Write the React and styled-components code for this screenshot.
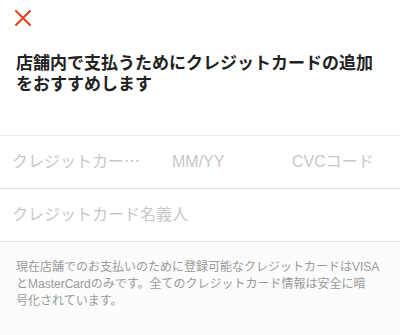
import React from "react";
import styled, { createGlobalStyle } from "styled-components";

const Global = createGlobalStyle`
  html, body {
    margin: 0;
    padding: 0;
    background: #ffffff;
  }
  body {
    font-family: "Liberation Sans", "Noto Sans CJK JP", sans-serif;
    -webkit-font-smoothing: antialiased;
  }
`;

const Page = styled.div`
  width: 400px;
  height: 335px;
  display: flex;
  flex-direction: column;
  background: #fcfcfc;
  overflow: hidden;
`;

const Header = styled.div`
  background: #ffffff;
  padding: 8px 0 0 12px;
`;

const CloseButton = styled.button`
  width: 22px;
  height: 20px;
  padding: 0;
  border: none;
  background: none;
  display: flex;
  align-items: center;
  justify-content: center;
`;

const Title = styled.h1`
  margin: 0;
  padding: 25px 16px 40px 16px;
  font-size: 17px;
  line-height: 21px;
  font-weight: bold;
  color: #222222;
  background: #ffffff;
`;

const Fields = styled.div`
  background: #ffffff;
  border-top: 1px solid #ececec;
  border-bottom: 1px solid #e4e4e4;
`;

const Row = styled.div`
  display: flex;
  align-items: center;
  height: 52px;
  padding-left: 12px;
  border-top: ${(p) => (p.$first ? "none" : "1px solid #e2e2e2")};
`;

const Input = styled.input`
  width: ${(p) => p.$width || "auto"};
  flex: ${(p) => (p.$grow ? 1 : "none")};
  min-width: 0;
  border: none;
  outline: none;
  padding: 0;
  background: transparent;
  font-family: "Liberation Sans", "Noto Sans CJK JP", sans-serif;
  font-size: 16px;
  color: #333;
  &::placeholder {
    color: #c7c7cc;
  }
`;

const Note = styled.p`
  margin: 0;
  padding: 17px 16px 0 16px;
  font-size: 12px;
  line-height: 17px;
  color: #9a9a9a;
`;

const CloseIcon = () => (
  <svg width="18" height="18" viewBox="0 0 18 18">
    <path
      d="M2 2 L16 16 M16 2 L2 16"
      stroke="#e0401c"
      strokeWidth="2"
      strokeLinecap="round"
    />
  </svg>
);

export default function App() {
  return (
    <>
      <Global />
      <Page>
        <Header>
          <CloseButton>
            <CloseIcon />
          </CloseButton>
        </Header>
        <Title>
          店舗内で支払うためにクレジットカードの追加
          <br />
          をおすすめします
        </Title>
        <Fields>
          <Row $first>
            <Input $width="160px" placeholder="クレジットカー⋯" />
            <Input $width="120px" placeholder="MM/YY" />
            <Input $grow placeholder="CVCコード" />
          </Row>
          <Row>
            <Input $grow placeholder="クレジットカード名義人" />
          </Row>
        </Fields>
        <Note>
          現在店舗でのお支払いのために登録可能なクレジットカードはVISAとMasterCardのみです。全てのクレジットカード情報は安全に暗
          <br />
          号化されています。
        </Note>
      </Page>
    </>
  );
}
